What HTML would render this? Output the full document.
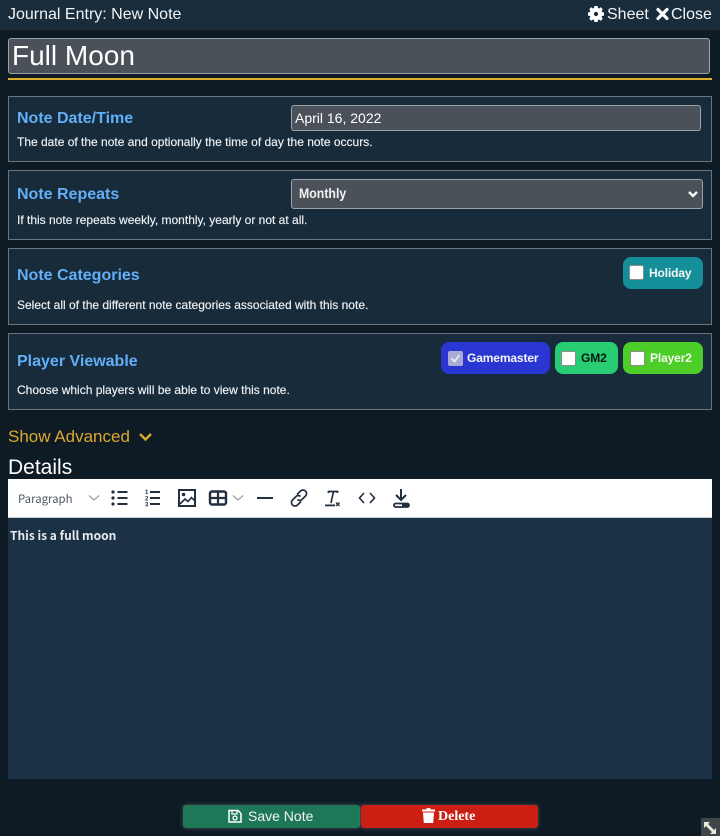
<!DOCTYPE html>
<html><head><meta charset="utf-8"><style>
html,body{margin:0;padding:0}
body{width:720px;height:836px;overflow:hidden;position:relative;background:#0f1b24;font-family:"Liberation Sans",sans-serif;color:#fff}
.a{position:absolute;white-space:nowrap}
.panel{position:absolute;left:8px;width:702px;background:#172b3b;border:1px solid #6b747c}
.input{position:absolute;background:#4b5159;border:1px solid #9ca3a9;border-radius:3px;box-sizing:border-box}
.h{position:absolute;left:17px;font-size:16px;font-weight:bold;color:#63aff7;white-space:nowrap;line-height:18px}
.d{position:absolute;left:17px;font-size:12px;color:#f0f2f4;white-space:nowrap;line-height:14px;-webkit-text-stroke:.15px #f0f2f4}
.chip{position:absolute;height:32px;border-radius:8px;font-size:12px;font-weight:bold;line-height:32px;white-space:nowrap;box-sizing:border-box;letter-spacing:-.13px}
.cb{position:absolute;top:9px;width:13px;height:13px;background:#fff;border:1px solid #8c8c8c;border-radius:2px}
.chip span{position:absolute;top:0}
svg{position:absolute;display:block}
</style></head><body>
<div class="a" style="left:0;top:0;width:720px;height:30px;background:#182c3c"></div>
<div class="a" style="left:8px;top:5px;font-size:16px;line-height:20px;color:#f2f4f5">Journal Entry: New Note</div>
<svg style="left:588px;top:6px" width="16" height="16" viewBox="0 0 17 17"><path fill="#fff" fill-rule="evenodd" d="M6.800 0h3.400l.4 2.200 1.100.5L13.600 1.300 15.700 3.400 14.400 5.300 14.900 6.400l2.100.4v3.400l-2.100.4-.5 1.100 1.300 1.900-2.100 2.100-1.900-1.300-1.100.5-.4 2.100H6.800l-.4-2.100-1.100-.5-1.900 1.300-2.100-2.100 1.300-1.900L2.100 10.600 0 10.200V6.800l2.100-.4.500-1.100L1.300 3.400 3.400 1.300l1.900 1.300 1.100-.5zM8.500 6.300a2.200 2.200 0 1 0 0 4.400 2.200 2.200 0 0 0 0-4.400z"/></svg>
<div class="a" style="left:607px;top:5px;font-size:16px;line-height:20px;color:#f2f4f5">Sheet</div>
<svg style="left:656px;top:7px" width="13" height="14" viewBox="0 0 13 14"><path d="M2 2.500l9 9M11 2.500l-9 9" stroke="#fff" stroke-width="3.200" fill="none" stroke-linecap="round"/></svg>
<div class="a" style="left:671px;top:5px;font-size:16px;line-height:20px;color:#f2f4f5">Close</div>

<div class="input" style="left:8px;top:38px;width:702px;height:36px;border-radius:3px"></div>
<div class="a" style="left:12px;top:38px;font-size:28px;line-height:36px;color:#fff">Full Moon</div>
<div class="a" style="left:8px;top:78px;width:704px;height:2px;background:#e0ad28"></div>

<div class="panel" style="top:96px;height:64px"></div>
<div class="h" style="top:110px">Note Date/Time</div>
<div class="input" style="left:291px;top:105px;width:410px;height:26px"></div>
<div class="a" style="left:295px;top:105px;font-size:14px;line-height:26px;color:#fff">April 16, 2022</div>
<div class="d" style="top:135px">The date of the note and optionally the time of day the note occurs.</div>

<div class="panel" style="top:170px;height:68px"></div>
<div class="h" style="top:186px">Note Repeats</div>
<div class="input" style="left:291px;top:179px;width:412px;height:30px"></div>
<div class="a" style="left:299px;top:179px;font-size:14px;font-weight:bold;line-height:29px;color:#f2f2f2;transform-origin:0 50%;transform:scaleX(.88)">Monthly</div>
<svg style="left:688px;top:190px" width="10" height="8" viewBox="0 0 10 8"><path d="M1 2l4 4 4-4" stroke="#fff" stroke-width="2.300" fill="none"/></svg>
<div class="d" style="top:213px">If this note repeats weekly, monthly, yearly or not at all.</div>

<div class="panel" style="top:248px;height:75px"></div>
<div class="h" style="top:267px">Note Categories</div>
<div class="d" style="top:298px">Select all of the different note categories associated with this note.</div>
<div class="chip" style="left:623px;top:257px;width:80px;background:#148f99;color:#f4f6f6"><div class="cb" style="left:6px;top:8px"></div><span style="left:26px">Holiday</span></div>

<div class="panel" style="top:333px;height:75px"></div>
<div class="h" style="top:353px">Player Viewable</div>
<div class="d" style="top:383px">Choose which players will be able to view this note.</div>
<div class="chip" style="left:441px;top:342px;width:109px;background:#2936d1;color:#f4f6f6"><div class="cb" style="left:7px;background:#a9abd6;border-color:#a9abd6"></div><svg style="left:8px;top:10px" width="13" height="13" viewBox="0 0 13 13"><path d="M2.500 6.500l3 3 5-6.500" stroke="#e6e7f2" stroke-width="2" fill="none"/></svg><span style="left:26px">Gamemaster</span></div>
<div class="chip" style="left:555px;top:342px;width:63px;background:#28cc72;color:#06180e"><div class="cb" style="left:6px"></div><span style="left:26px">GM2</span></div>
<div class="chip" style="left:623px;top:342px;width:80px;background:#4ccd28;color:#f4f9f2"><div class="cb" style="left:7px"></div><span style="left:27px">Player2</span></div>

<div class="a" style="left:8px;top:427px;font-size:17px;line-height:20px;color:#d9a82e">Show Advanced</div>
<svg style="left:138px;top:431px" width="15" height="11" viewBox="0 0 15 11"><path d="M2 3l5.500 5.500L13 3" stroke="#d9a82e" stroke-width="2.400" fill="none"/></svg>
<div class="a" style="left:8px;top:456px;font-size:21px;line-height:24px;color:#fff">Details</div>

<div class="a" style="left:8px;top:479px;width:704px;height:38px;background:#fff"></div>
<div class="a" style="left:8px;top:517px;width:704px;height:1px;background:#c8cdd1"></div>
<div class="a" style="left:8px;top:518px;width:704px;height:261px;background:#1b3146"></div>
<div class="a" style="left:18px;top:489px;font-size:11.400px;line-height:20px;color:#4a5663;font-family:'Noto Sans CJK JP',sans-serif">Paragraph</div>
<svg style="left:0;top:479px" width="720" height="38" viewBox="0 0 720 38" fill="none">
<path d="M89 16.500l5 4.500 5-4.500" stroke="#9aa3ac" stroke-width="1.300"/>
<g fill="#222f3e"><circle cx="113" cy="13" r="1.600"/><circle cx="113" cy="19" r="1.600"/><circle cx="113" cy="25" r="1.600"/><rect x="117.500" y="12" width="10" height="2"/><rect x="117.500" y="18" width="10" height="2"/><rect x="117.500" y="24" width="10" height="2"/>
<rect x="150" y="12" width="10" height="2"/><rect x="150" y="18" width="10" height="2"/><rect x="150" y="24" width="10" height="2"/>
<text x="145" y="15" font-size="6" font-weight="bold" font-family="Liberation Sans,sans-serif">1</text><text x="145" y="21.500" font-size="6" font-weight="bold" font-family="Liberation Sans,sans-serif">2</text><text x="145" y="27.500" font-size="6" font-weight="bold" font-family="Liberation Sans,sans-serif">3</text></g>
<rect x="179" y="11" width="16" height="16" stroke="#222f3e" stroke-width="2"/><circle cx="183.500" cy="15.500" r="1.800" fill="#222f3e"/><path d="M180 25l5-5 3 2.500 3.500-4 3 3" stroke="#222f3e" stroke-width="1.600"/>
<rect x="210" y="12.500" width="16" height="13" rx="2" stroke="#222f3e" stroke-width="2.400"/><path d="M210 19h16M218 12v14" stroke="#222f3e" stroke-width="2.200"/><path d="M233 16.500l5 4.500 5-4.500" stroke="#9aa3ac" stroke-width="1.300"/>
<rect x="257" y="18" width="16" height="2" fill="#222f3e"/>
<path d="M297 15.500l3.500-3.500a3.200 3.200 0 0 1 5 5l-3.500 3.500a3.200 3.200 0 0 1-4.500 0M301 22.500l-3.500 3.500a3.200 3.200 0 0 1-5-5l3.500-3.500a3.200 3.200 0 0 1 4.500 0" stroke="#222f3e" stroke-width="1.700"/>
<path d="M328.500 14v-1.500h9V14M333.500 12.500l-2.500 11.500" stroke="#222f3e" stroke-width="1.700"/><rect x="325" y="25.500" width="10" height="1.800" fill="#222f3e"/><path d="M336 23.500l3.500 3.500M339.500 23.500l-3.500 3.500" stroke="#222f3e" stroke-width="1.400"/>
<path d="M364 14l-4.500 5 4.500 5M370 14l4.500 5-4.500 5" stroke="#222f3e" stroke-width="1.600"/>
<path d="M401 10v10.500M396 16l5 5 5-5" stroke="#222f3e" stroke-width="2"/><rect x="394" y="24.500" width="15" height="3.500" rx="1.700" stroke="#222f3e" stroke-width="1.800"/><rect x="402" y="24" width="7" height="4" fill="#222f3e"/>
</svg>
<div class="a" style="left:10px;top:526px;font-size:12px;font-weight:700;line-height:19px;color:#e8eaec;font-family:'Noto Sans CJK JP',sans-serif">This is a full moon</div>

<div class="a" style="left:183px;top:805px;width:177px;height:23px;background:#1e7858;border-radius:3px;box-shadow:0 0 4px rgba(120,140,150,.5)"></div>
<div class="a" style="left:361px;top:805px;width:177px;height:23px;background:#cc1f14;border-radius:3px;box-shadow:0 0 4px rgba(120,140,150,.5)"></div>
<svg style="left:228px;top:809px" width="14" height="14" viewBox="0 0 14 14" fill="none"><path d="M1 1.500h9l3 3v8.500H1z" stroke="#fff" stroke-width="1.500"/><path d="M4 1.500v3.500h5V1.500" stroke="#fff" stroke-width="1.200"/><circle cx="7" cy="9" r="2" stroke="#fff" stroke-width="1.300"/></svg>
<div class="a" style="left:248px;top:806px;font-size:14px;line-height:20px;color:#f0f4f2">Save Note</div>
<svg style="left:422px;top:808px" width="13" height="15" viewBox="0 0 13 15"><path fill="#fff" d="M0 1.500h4L5 0h3l1 1.500h4V3.500H0zM1 4.500h11l-.8 10.500H1.800z"/></svg>
<div class="a" style="left:438px;top:808px;font-size:14px;font-weight:bold;line-height:18px;color:#fff;font-family:'Liberation Serif',serif">Delete</div>

<div class="a" style="left:701px;top:818px;width:19px;height:18px;background:#3f4549"></div>
<svg style="left:701px;top:818px" width="19" height="18" viewBox="0 0 19 18" fill="#e8e8dc"><path d="M3 4h6L3 10zM15 16H9l6-6z"/><path d="M5 6l8 8" stroke="#e8e8dc" stroke-width="3"/></svg>
</body></html>
